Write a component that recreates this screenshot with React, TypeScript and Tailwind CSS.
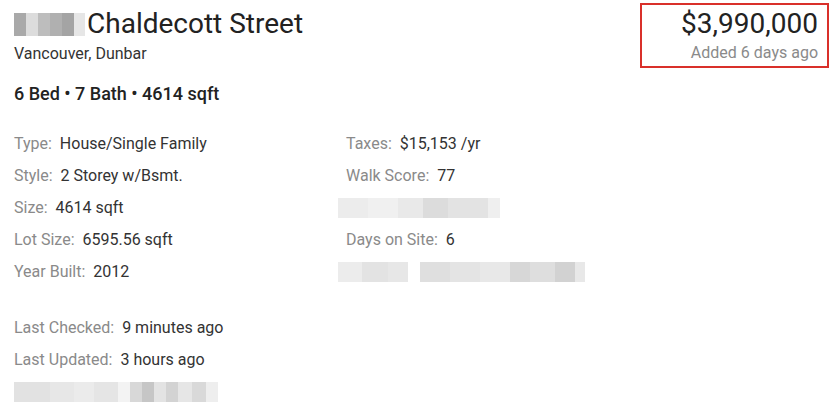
import React from "react";

const Blur = ({ cells, h = "h-[20px]" }: { cells: [number, string][]; h?: string }) => (
  <div className={`flex ${h}`}>
    {cells.map(([w, c], i) => (
      <div key={i} style={{ width: w, backgroundColor: c }} />
    ))}
  </div>
);

const Row = ({ label, value }: { label: string; value: string }) => (
  <div className="h-[32px] flex items-center text-[16px] whitespace-pre">
    <span className="text-[#8a8a8a]">{label}:  </span>
    <span className="text-[#333]">{value}</span>
  </div>
);

export default function App() {
  return (
    <div className="w-[832px] h-[417px] bg-white overflow-hidden relative" style={{ fontFamily: "Roboto, sans-serif" }}>
      <div className="flex justify-between pl-[14px] pr-[3px] pt-[3px]">
        <div className="pt-[4px]">
          <div className="flex items-center h-[34px]">
            <Blur
              h="h-[23px]"
              cells={[
                [12, "#a9a9a9"],
                [12, "#dcdcdc"],
                [12, "#bdbdbd"],
                [12, "#b0b0b0"],
                [12, "#a4a4a4"],
                [11, "#e6e6e6"],
              ]}
            />
            <span className="ml-[2px] text-[28px] text-[#222] leading-none">Chaldecott Street</span>
          </div>
          <div className="text-[16px] text-[#333] mt-[2px] leading-[22px]">Vancouver, Dunbar</div>
        </div>
        <div className="border-2 border-[#d9302a] w-[189px] h-[65px] flex flex-col items-end pr-[9px] pt-[2px]">
          <div className="text-[28px] text-[#222] leading-[34px]">$3,990,000</div>
          <div className="text-[16px] text-[#8a8a8a] leading-[20px] mt-[2px]">Added 6 days ago</div>
        </div>
      </div>
      <div className="pl-[14px] mt-[14px] text-[18px] font-medium text-[#222] leading-[24px]">6 Bed • 7 Bath • 4614 sqft</div>
      <div className="pl-[14px] mt-[22px] grid grid-cols-[332px_1fr]">
        <div className="flex flex-col">
          <Row label="Type" value="House/Single Family" />
          <Row label="Style" value="2 Storey w/Bsmt." />
          <Row label="Size" value="4614 sqft" />
          <Row label="Lot Size" value="6595.56 sqft" />
          <Row label="Year Built" value="2012" />
        </div>
        <div className="flex flex-col">
          <Row label="Taxes" value="$15,153 /yr" />
          <Row label="Walk Score" value="77" />
          <div className="h-[32px] flex items-center -ml-[8px]">
            <Blur
              cells={[
                [30, "#ececec"],
                [30, "#f0f0f0"],
                [25, "#e9e9e9"],
                [25, "#dcdcdc"],
                [40, "#e3e3e3"],
                [12, "#efefef"],
              ]}
            />
          </div>
          <Row label="Days on Site" value="6" />
          <div className="h-[32px] flex items-center -ml-[8px]">
            <Blur
              cells={[
                [24, "#ececec"],
                [26, "#e3e3e3"],
                [20, "#e7e7e7"],
                [12, "#ffffff"],
                [30, "#dfdfdf"],
                [30, "#e4e4e4"],
                [30, "#e8e8e8"],
                [20, "#d7d7d7"],
                [25, "#dedede"],
                [20, "#d2d2d2"],
                [10, "#e8e8e8"],
              ]}
            />
          </div>
        </div>
      </div>
      <div className="pl-[14px] mt-[24px] flex flex-col">
        <Row label="Last Checked" value="9 minutes ago" />
        <Row label="Last Updated" value="3 hours ago" />
        <div className="h-[32px] flex items-center">
          <Blur
            cells={[
              [36, "#e2e2e2"],
              [24, "#e7e7e7"],
              [20, "#ebebeb"],
              [24, "#e5e5e5"],
              [12, "#f3f3f3"],
              [12, "#d8d8d8"],
              [12, "#c6c6c6"],
              [12, "#e3e3e3"],
              [12, "#d3d3d3"],
              [14, "#e6e6e6"],
              [14, "#d9d9d9"],
              [12, "#eeeeee"],
            ]}
          />
        </div>
      </div>
    </div>
  );
}
